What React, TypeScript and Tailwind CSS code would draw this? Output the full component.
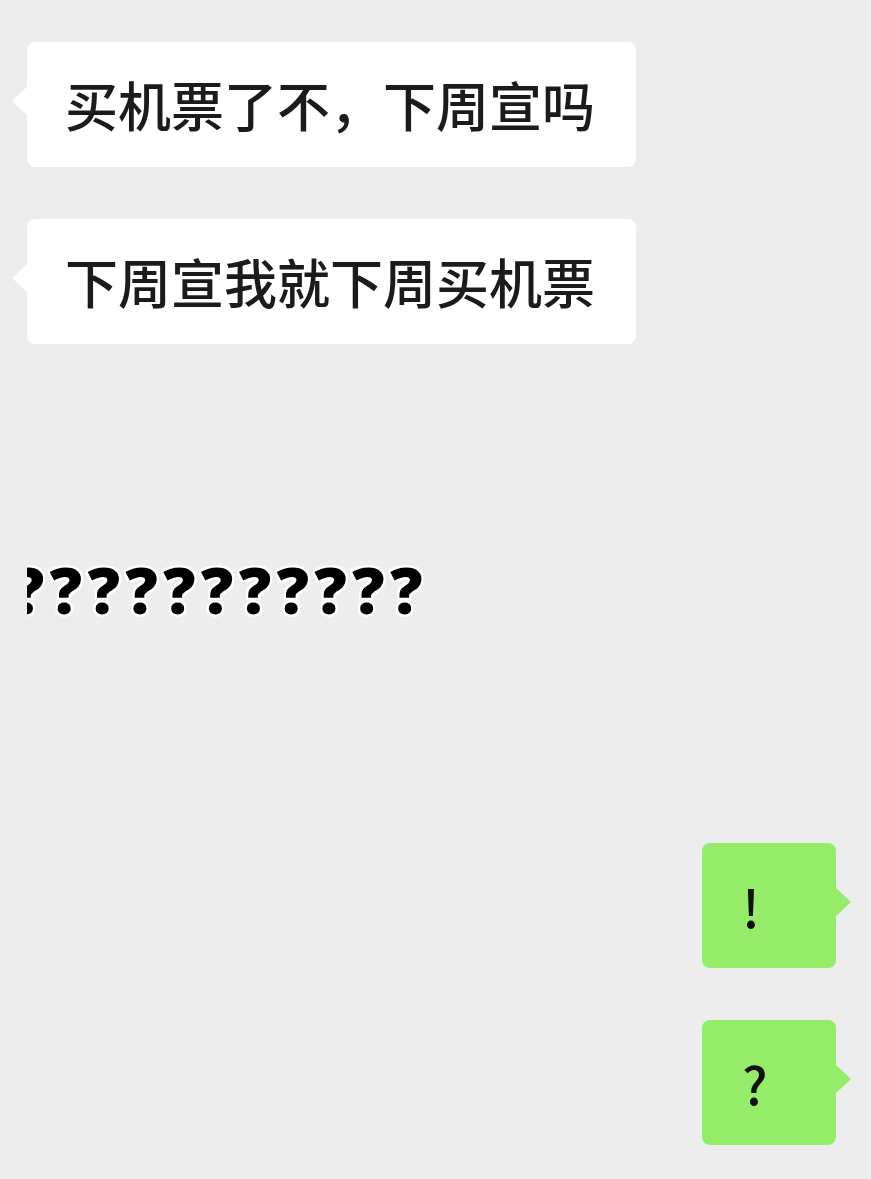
import React from 'react';

interface BubbleProps {
  text: string;
  mine?: boolean;
}

const Bubble: React.FC<BubbleProps> = ({ text, mine }) => {
  if (mine) {
    return (
      <div className="relative flex h-[125px] w-[134px] items-center rounded-[8px] bg-[#95ec69] pl-[40px]">
        <span className="font-['Noto_Sans_CJK_SC',sans-serif] text-[52px] font-medium leading-none text-[#111]">
          {text}
        </span>
        <div className="absolute right-[-15px] top-[44px] h-0 w-0 border-y-[15px] border-l-[16px] border-y-transparent border-l-[#95ec69]" />
      </div>
    );
  }

  return (
    <div className="relative flex h-[125px] w-[609px] items-center rounded-[8px] bg-white pl-[38px]">
      <span className="font-['Noto_Sans_CJK_SC',sans-serif] text-[53px] font-medium leading-none text-[#1b1b1b]">
        {text}
      </span>
      <div className="absolute left-[-15px] top-[44px] h-0 w-0 border-y-[15px] border-r-[16px] border-y-transparent border-r-white" />
    </div>
  );
};

const App: React.FC = () => {
  const marks = '???????????';

  return (
    <div className="flex h-[1179px] w-[871px] flex-col overflow-hidden bg-[#ededed]">
      <div className="flex flex-col gap-[52px] pl-[27px] pt-[42px]">
        <Bubble text="买机票了不，下周宣吗" />
        <Bubble text="下周宣我就下周买机票" />
      </div>

      {/* sticker row, clipped at the left edge of the bubbles */}
      <div className="ml-[27px] mt-[211px] h-[70px] w-[420px] overflow-hidden">
        <div className="ml-[-15px] whitespace-nowrap font-['Open_Sans',sans-serif] text-[64px] font-extrabold leading-[70px] tracking-[5.5px] text-black [text-shadow:2px_0_0_#fff,-2px_0_0_#fff,0_2px_0_#fff,0_-2px_0_#fff,2px_2px_0_#fff,-2px_-2px_0_#fff,2px_-2px_0_#fff,-2px_2px_0_#fff,0_0_4px_#fff]">
          {marks}
        </div>
      </div>

      <div className="mt-[218px] flex flex-col items-end gap-[52px] pr-[35px]">
        <Bubble text="!" mine />
        <Bubble text="?" mine />
      </div>
    </div>
  );
};

export default App;
